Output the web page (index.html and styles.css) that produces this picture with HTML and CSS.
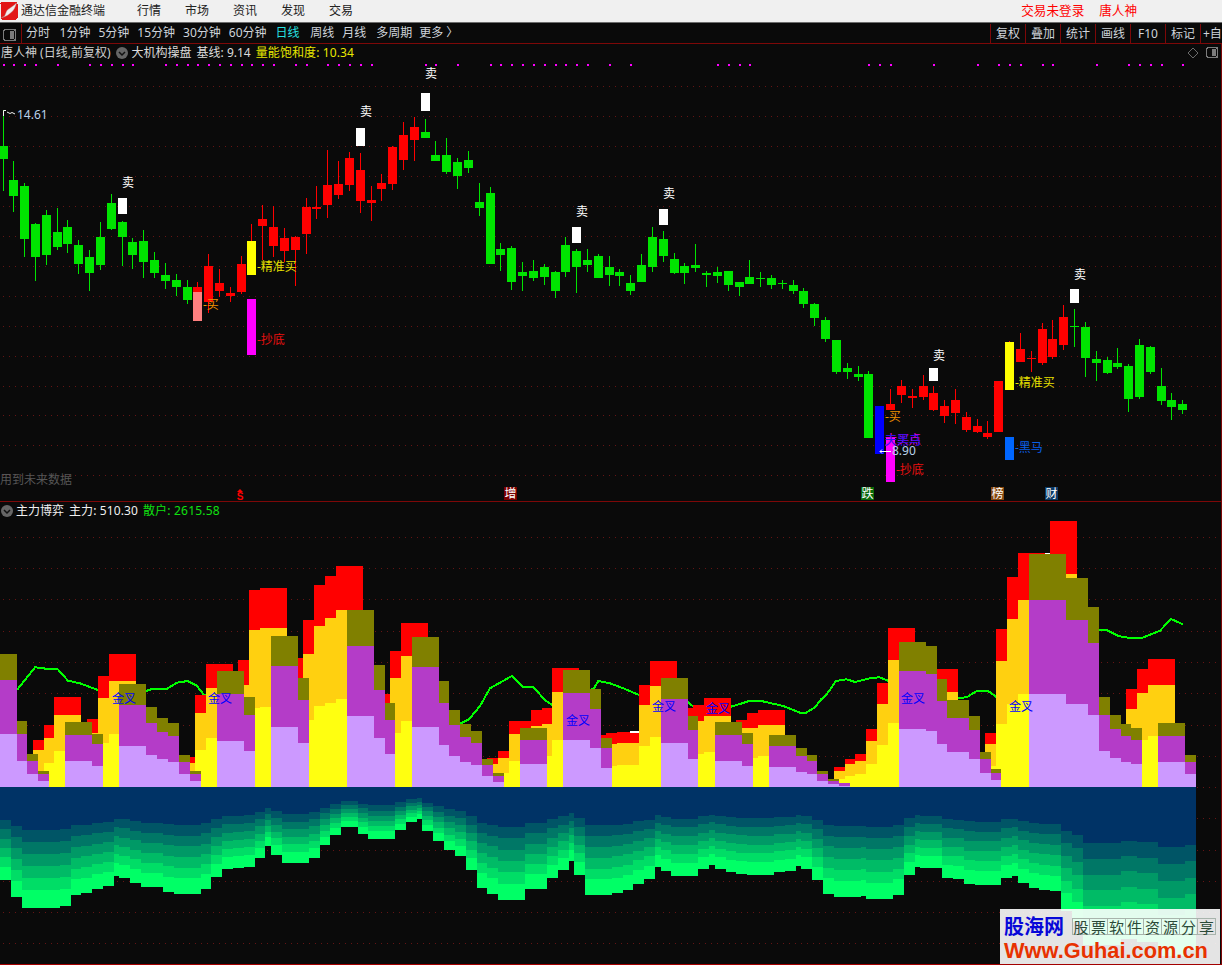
FILE: index.html
```html
<!DOCTYPE html>
<html lang="zh-CN">
<head>
<meta charset="utf-8">
<title>通达信金融终端</title>
<link rel="stylesheet" href="styles.css">
</head>
<body>
<div class="app">
  <header class="titlebar">
    <svg class="logo" viewBox="0 0 18 18" width="18" height="18" aria-hidden="true">
      <rect x="0.5" y="0" width="17" height="17.5" rx="1.5" class="logo-bg"/>
      <path class="logo-swoosh" d="M1.5 15.5 C6 15.5 5 10 8 7.5 C10.5 5.5 13 4.5 16.5 1 C15 6 13.5 8.5 11 10.5 C8.5 12.5 6.5 14.5 1.5 15.5 Z"/>
    </svg>
    <span class="app-name">通达信金融终端</span>
    <nav class="main-nav">
      <span>行情</span><span>市场</span><span>资讯</span><span>发现</span><span>交易</span>
    </nav>
    <div class="account"><span>交易未登录</span><span>唐人神</span></div>
  </header>

  <div class="toolbar">
    <div class="toggle-cell">
      <svg class="toggle-icon" viewBox="0 0 13 12" width="13" height="12" aria-hidden="true">
        <rect x="0.5" y="0.5" width="12" height="11" rx="2" class="icon-line"/>
        <rect x="7" y="2" width="4" height="8" class="icon-fill"/>
      </svg>
    </div>
    <div class="periods">
      <span class="first">分时</span><span>1分钟</span><span>5分钟</span><span>15分钟</span><span>30分钟</span><span>60分钟</span><span class="active">日线</span><span>周线</span><span>月线</span><span class="multi">多周期</span><span>更多 〉</span>
    </div>
    <div class="tools">
      <span>复权</span><span>叠加</span><span>统计</span><span>画线</span><span>F10</span><span>标记</span><span class="tool-last">+自</span>
    </div>
  </div>

  <section class="panel panel-main">
    <svg id="mainChart" class="chart" viewBox="0 44 1221 457" width="1221" height="457"></svg>
    <div class="legend legend-main">
      <span class="legend-stock">唐人神 (日线,前复权)</span>
      <svg class="chevron" viewBox="0 0 12 12" width="12" height="12" aria-hidden="true"><circle cx="6" cy="6" r="6" class="chevron-bg"/><path d="M3 5 L6 8 L9 5" class="chevron-mark"/></svg>
      <span>大机构操盘</span>
      <span class="legend-base">基线: 9.14</span>
      <span class="legend-yellow">量能饱和度: 10.34</span>
    </div>
    <div class="corner-icons">
      <svg viewBox="0 0 12 12" width="12" height="12" aria-hidden="true"><path d="M6 1 L11 6 L6 11 L1 6 Z" class="icon-thin"/></svg>
      <svg viewBox="0 0 13 12" width="13" height="12" aria-hidden="true"><rect x="0.5" y="0.5" width="11" height="10" rx="2" class="icon-line"/><rect x="6" y="2" width="4" height="7" class="icon-fill"/></svg>
    </div>
    <div class="future-note">用到未来数据</div>
  </section>

  <section class="panel panel-sub">
    <svg id="subChart" class="chart" viewBox="0 502 1221 462" width="1221" height="462"></svg>
    <div class="legend legend-sub">
      <svg class="chevron" viewBox="0 0 12 12" width="12" height="12" aria-hidden="true"><circle cx="6" cy="6" r="6" class="chevron-bg"/><path d="M3 5 L6 8 L9 5" class="chevron-mark"/></svg>
      <span class="legend-title">主力博弈</span>
      <span class="legend-title">主力: 510.30</span>
      <span class="legend-green">散户: 2615.58</span>
    </div>
    <div class="watermark">
      <div class="wm-top">
        <span class="wm-brand">股海网</span>
        <span class="wm-cells"><i>股</i><i>票</i><i>软</i><i>件</i><i>资</i><i>源</i><i>分</i><i>享</i></span>
      </div>
      <div class="wm-url">Www.Guhai.com.cn</div>
    </div>
  </section>
</div>
<script src="chart.js"></script>
</body>
</html>
```

FILE: styles.css
```css
* { box-sizing: border-box; }
html, body { margin: 0; padding: 0; background: #0a0a0a; }
body { width: 1222px; height: 965px; overflow: hidden; font: 12px/16px "Noto Sans", "Noto Sans CJK SC", sans-serif; color: #d2d2d2; }
.app { display: flex; flex-direction: column; width: 1222px; height: 965px; }

.titlebar { display: flex; align-items: center; height: 23px; flex: none; background: #f0f0f0; border-bottom: 1px solid #6c6c6c; color: #222; }
.logo { flex: none; margin-right: 3px; }
.logo-bg { fill: #e21616; }
.logo-swoosh { fill: #f4eeee; stroke: #a9a9a9; stroke-width: .4; }
.app-name { width: 84px; white-space: nowrap; }
.main-nav { display: flex; gap: 24px; margin-left: 32px; }
.account { display: flex; gap: 15px; margin-left: auto; margin-right: 85px; color: #f00; font-size: 12.6px; }

.toolbar { display: flex; align-items: stretch; height: 21px; flex: none; background: #0a0a0a; border-bottom: 1px solid #7d0808; color: #cfd4da; }
.toggle-cell { display: flex; align-items: center; width: 22px; padding-left: 3px; padding-top: 2px; border-right: 1px solid #7d0808; margin: 1px 0 0; flex: none; }
.periods { display: flex; align-items: center; gap: 8px; padding-left: 4px; white-space: nowrap; }
.periods .first { margin-right: 1.6px; }
.periods .active { margin: 0 2.6px 0 1px; color: #27e0e0; }
.periods .multi { margin: 0 -1px 0 2px; }
.tools { display: flex; align-items: stretch; margin-left: auto; }
.tools span { display: flex; align-items: center; justify-content: center; width: 35px; border-left: 1px solid #7d0808; margin-top: 1px; }
.tools .tool-last { width: 22px; overflow: hidden; justify-content: flex-start; padding-left: 2px; white-space: nowrap; }
.icon-line { fill: none; stroke: #7b7b7b; stroke-width: 1.4; }
.icon-fill { fill: #7b7b7b; }
.icon-thin { fill: none; stroke: #6a6a6a; stroke-width: 1; }

.panel { position: relative; flex: none; background: #0a0a0a; border-right: 1px solid #7d0808; }
.panel-main { height: 458px; border-bottom: 1px solid #7d0808; }
.panel-sub { height: 463px; border-bottom: 1px solid #a40000; }
.chart { display: block; }

.legend { position: absolute; top: 0; left: 0; display: flex; align-items: center; height: 17px; white-space: nowrap; color: #dcdcdc; }
.legend-main { padding-left: 1px; }
.legend-main .chevron { margin: 0 4px 0 5px; }
.legend-stock { color: #cfcfcf; }
.legend-base { margin-left: 5px; }
.legend-yellow { margin-left: 5px; color: #e8e800; letter-spacing: .1px; }
.legend-sub { top: 0; padding-left: 1px; height: 17px; }
.legend-sub .chevron { margin-right: 3px; }
.legend-sub .legend-title + .legend-title { margin-left: 5px; color: #f0f0f0; letter-spacing: .1px; }
.legend-title { color: #f0f0f0; }
.legend-green { margin-left: 5px; color: #10e010; letter-spacing: .2px; }
.chevron-bg { fill: #666; }
.chevron-mark { fill: none; stroke: #111; stroke-width: 1.5; }

.corner-icons { position: absolute; top: 3px; right: 2px; display: flex; align-items: center; gap: 7px; }
.future-note { position: absolute; left: 0; top: 428px; color: #565656; }

.watermark { position: absolute; right: 1px; bottom: 0; display: flex; flex-direction: column; width: 220px; height: 55px; padding: 5px 3px 0 4px; background: rgba(255, 255, 255, .89); }
.wm-top { display: flex; align-items: center; gap: 8px; height: 24px; }
.wm-brand { font: bold 20px/24px "Noto Sans CJK SC", sans-serif; color: #0808d8; white-space: nowrap; }
.wm-cells { display: flex; }
.wm-cells i { display: block; width: 18px; height: 17px; font: normal 15px/16px "Noto Sans CJK SC", sans-serif; color: #2b4a38; text-align: center; border: 1px solid #a8b4ac; border-left-width: 0; }
.wm-cells i:first-child { border-left-width: 1px; }
.wm-url { margin-top: 1px; font: bold 21.8px/24px "Liberation Sans", sans-serif; color: #e83200; white-space: nowrap; }

/* chart marks */
.grid { stroke: #651414; stroke-width: 1; stroke-dasharray: 1 5; fill: none; }
.c-r { fill: #ff0000; } .c-g { fill: #00e400; }
.w-r { stroke: #ff0000; } .w-g { stroke: #00e400; }
.wick { stroke-width: 1; fill: none; }
.pink { fill: #ff8080; } .yel { fill: #ffff00; } .mag { fill: #ff00ff; } .blu { fill: #0000ff; } .blu2 { fill: #0066ff; } .wht { fill: #ffffff; }
.dot { fill: #ff00ff; }
.t { font: 12px "Noto Sans", "Noto Sans CJK SC", sans-serif; }
.t-white { fill: #fff; } .t-grey { fill: #b9d2ea; } .t-orange { fill: #f09000; } .t-yellow { fill: #e8e000; } .t-red { fill: #e81010; } .t-blue { fill: #0a60e8; } .t-mag { fill: #e000e0; } .t-pure-blue { fill: #0000ff; } .t-purple { fill: #3010f0; }
.flag { fill: none; stroke: #f4f4f4; stroke-width: 1; }
.arrow { fill: none; stroke: #fff; stroke-width: 1; }
.chip-red { fill: #7a0000; } .chip-green { fill: #0a6a0a; } .chip-brown { fill: #85480f; } .chip-navy { fill: #0c3a66; }
.t-chip { fill: #fff; text-anchor: middle; }
.t-s { font: bold 10px "Liberation Sans", sans-serif; fill: #f00; text-anchor: middle; }
.s-tip { fill: #f00; }
.t-mid { text-anchor: middle; }
.red { fill: #ff0000; } .gold { fill: #ffd010; } .yellow { fill: #ffff10; } .olive { fill: #808000; } .purple { fill: #b43cc8; } .lilac { fill: #cc99ff; }
.trend { fill: none; stroke: #00ff00; stroke-width: 2; shape-rendering: crispEdges; }
.navy { fill: #003366; }
.b0 { fill: #005566; } .b1 { fill: #007766; } .b2 { fill: #009966; } .b3 { fill: #00bb66; } .b4 { fill: #00dd66; } .b5 { fill: #00ff66; }
rect { shape-rendering: crispEdges; }
line { shape-rendering: crispEdges; }
```

FILE: chart.js
```js
(function () {
  var NS = 'http://www.w3.org/2000/svg';
  function el(parent, name, attrs, text) {
    var n = document.createElementNS(NS, name);
    for (var k in attrs) n.setAttribute(k, attrs[k]);
    if (text) n.textContent = text;
    parent.appendChild(n);
    return n;
  }
  function rect(p, x1, y1, x2, y2, cls) {
    if (y2 <= y1 || x2 <= x1) return;
    el(p, 'rect', { x: x1, y: y1, width: x2 - x1, height: y2 - y1, 'class': cls });
  }
  function gridLines(p, ys) {
    ys.forEach(function (y) {
      el(p, 'line', { x1: 3, y1: y + 0.5, x2: 1221, y2: y + 0.5, 'class': 'grid' });
    });
  }
  function label(p, x, y, txt, cls) {
    el(p, 'text', { x: x, y: y + 4, 'class': 't ' + cls }, txt);
  }

  /* ---------- price panel ---------- */
  var main = document.getElementById('mainChart');
  gridLines(main, [86, 116, 146, 176, 206, 236, 266, 296, 326, 356, 386, 415, 445, 475]);

  var dots = [3,13,24,35,57,89,100,111,122,132,165,176,187,197,208,219,230,241,251,262,273,295,306,327,338,349,360,371,
    425,435,457,490,500,511,522,533,544,555,565,576,587,609,630,717,728,739,749,
    868,879,890,933,977,998,1009,1020,1042,1052,1096,1128,1139,1150,1161,1182];
  dots.forEach(function (x) { rect(main, x, 64, x + 2, 66, 'dot'); });

  // [x, bodyTop, bodyBottom, wickTop, wickBottom, colour]
  var candles = [
    [3,146,159,110,191,'g'],[13,180,196,161,212,'g'],[24,186,239,183,257,'g'],[35,224,257,223,281,'g'],[46,215,255,210,265,'g'],
    [57,232,247,208,250,'g'],[67,227,244,220,253,'g'],[78,245,264,240,274,'g'],[89,257,273,250,291,'g'],[100,237,265,222,270,'g'],
    [111,203,229,194,230,'g'],[122,222,237,221,266,'g'],[132,242,255,238,269,'g'],[143,241,262,230,278,'g'],[154,260,273,252,278,'g'],
    [165,275,281,263,289,'g'],[176,280,287,274,296,'g'],[187,287,300,280,304,'g'],
    [197,287,292,282,292,'r'],[208,266,302,254,313,'r'],[219,283,291,269,297,'r'],[230,293,296,287,302,'r'],[241,264,292,256,294,'r'],
    [251,241,275,224,241,'r'],[262,219,226,205,260,'r'],[273,227,246,206,257,'r'],[284,238,251,228,262,'r'],[295,237,250,236,286,'r'],
    [306,207,234,198,254,'r'],[316,207,209,186,219,'r'],[327,185,205,150,218,'r'],[338,184,195,161,199,'r'],[349,158,185,152,191,'r'],
    [360,170,201,153,213,'r'],[371,200,203,186,221,'r'],[381,183,189,174,201,'r'],[392,147,184,146,190,'r'],[403,135,160,122,170,'r'],
    [414,127,140,117,161,'r'],
    [425,132,138,119,138,'g'],[435,155,161,141,161,'g'],[446,155,172,138,174,'g'],[457,162,176,158,189,'g'],[468,160,168,151,173,'g'],
    [479,202,208,183,216,'g'],[490,193,264,187,264,'g'],[500,249,255,243,271,'g'],[511,248,282,246,290,'g'],[522,272,276,262,291,'g'],
    [533,271,278,260,281,'g'],[544,267,277,264,285,'g'],[555,272,291,271,298,'g'],[565,245,272,237,277,'g'],[576,251,267,249,293,'g'],
    [587,260,265,249,272,'g'],[598,256,278,254,278,'g'],[609,267,275,256,286,'g'],[619,272,276,269,286,'g'],[630,283,291,275,295,'g'],
    [641,265,282,254,282,'g'],[652,237,267,227,272,'g'],[663,239,256,231,262,'g'],[674,259,273,253,274,'g'],[684,266,273,263,284,'g'],
    [695,265,268,244,272,'g'],[706,273,275,271,287,'g'],[717,272,276,267,283,'g'],[728,271,285,271,291,'g'],[739,282,287,282,296,'g'],
    [749,277,284,260,284,'g'],[760,278,279,272,287,'g'],[771,278,285,275,289,'g'],[782,283,284,280,289,'g'],[793,285,291,280,294,'g'],
    [803,291,304,288,308,'g'],[814,304,318,303,326,'g'],[825,320,339,317,342,'g'],[836,340,372,340,374,'g'],[847,368,372,363,379,'g'],
    [858,374,377,366,381,'g'],[868,374,438,371,438,'g'],
    [890,404,410,389,410,'r'],[901,386,395,380,403,'r'],[912,396,398,389,408,'r'],[923,386,397,375,400,'r'],[933,393,410,386,411,'r'],
    [944,406,416,400,423,'r'],[955,400,413,389,424,'r'],[966,417,430,412,432,'r'],[977,426,432,419,433,'r'],[987,433,437,421,439,'r'],
    [998,381,432,381,432,'r'],[1009,342,345,341,345,'r'],[1020,349,362,333,362,'r'],[1031,358,359,351,372,'r'],[1042,329,363,323,365,'r'],
    [1052,339,357,320,359,'r'],[1063,317,345,305,350,'r'],
    [1074,326,327,309,347,'g'],[1085,327,358,322,377,'g'],[1096,359,363,351,381,'g'],[1107,360,373,357,374,'g'],[1117,363,367,348,369,'g'],
    [1128,366,399,364,412,'g'],[1139,345,397,339,399,'g'],[1150,347,372,346,374,'g'],[1161,386,401,368,405,'g'],[1171,400,407,393,420,'g'],
    [1182,404,410,400,414,'g']
  ];
  candles.forEach(function (c) {
    el(main, 'line', { x1: c[0] + 0.5, y1: c[3], x2: c[0] + 0.5, y2: c[4], 'class': 'wick w-' + c[5] });
    rect(main, Math.max(0, c[0] - 4), c[1], c[0] + 5, c[2], 'c-' + c[5]);
  });

  // signal bars [x, top, bottom, class]
  [[197,292,321,'pink'],[251,241,275,'yel'],[251,299,355,'mag'],[1009,342,390,'yel'],[879,406,454,'blu'],[890,437,482,'mag'],[1009,437,460,'blu2'],
   [122,198,214,'wht'],[360,128,146,'wht'],[425,93,111,'wht'],[576,227,243,'wht'],[663,209,225,'wht'],[933,368,381,'wht'],[1074,289,303,'wht']
  ].forEach(function (b) { rect(main, b[0] - 4, b[1], b[0] + 5, b[2], b[3]); });

  [[128,183],[366,112],[431,74],[582,212],[669,194],[939,356],[1080,275]].forEach(function (p) {
    el(main, 'text', { x: p[0], y: p[1] + 4, 'class': 't t-white t-mid' }, '卖');
  });
  label(main, 203, 305, '-买', 't-orange');
  label(main, 885, 417, '-买', 't-orange');
  label(main, 257, 267, '-精准买', 't-yellow');
  label(main, 1015, 383, '-精准买', 't-yellow');
  label(main, 257, 340, '-抄底', 't-red');
  label(main, 896, 470, '-抄底', 't-red');
  label(main, 1015, 448, '-黑马', 't-blue');
  label(main, 885, 440, '大买点', 't-mag');
  label(main, 885, 441, '天黑马', 't-purple');
  label(main, 892, 451, '8.90', 't-grey');
  el(main, 'path', { d: 'M880 451.5 H891 M882 449.5 L880 451.5 L882 453.5', 'class': 'arrow' });
  el(main, 'path', { d: 'M3.5 116 V110.5 H6 M7 112 L10 113.5 L12 112.5 L15 114', 'class': 'flag' });
  label(main, 17, 115, '14.61', 't-grey');

  // event chips
  [[504,'增','chip-red'],[861,'跌','chip-green'],[991,'榜','chip-brown'],[1045,'财','chip-navy']].forEach(function (c) {
    rect(main, c[0], 487, c[0] + 13, 500, c[2]);
    el(main, 'text', { x: c[0] + 6.5, y: 498, 'class': 't t-chip' }, c[1]);
  });
  el(main, 'polygon', { points: '240,489 237,492 243,492', 'class': 's-tip' });
  el(main, 'text', { x: 240, y: 500, 'class': 't-s' }, 'S');

  /* ---------- volume panel ---------- */
  var sub = document.getElementById('subChart');
  var BASE = 787;
  gridLines(sub, [537, 568, 599, 631, 662, 693, 725, 756, 787, 818, 850, 881, 912, 943]);

  function pts(ox, oy, list) {
    return list.map(function (p) { return (ox + p[0] / 3).toFixed(1) + ',' + (oy + p[1] / 3).toFixed(1); }).join(' ');
  }
  var trend = [
    pts(0, 470, [[51,660],[105,592],[138,596],[172,596],[204,632],[240,640],[294,660],[438,663],[456,657],[502,656],[530,638],[563,633],[590,647],[612,675]]),
    pts(400, 600, [[183,370],[207,358],[240,318],[270,265],[300,248],[335,228],[369,260],[399,260],[435,300],[456,315],[582,265],[595,243],[630,250],[670,265],[717,285],[865,307],[880,320],[993,320],[1020,312],[1050,302],[1080,302],[1150,318],[1205,340],[1215,340],[1245,322],[1260,302]]),
    pts(820, 510, [[0,573],[20,553],[48,513],[80,508],[105,516],[150,505],[178,502],[204,512],[414,564],[440,562],[472,542],[503,542],[528,560],[837,359],[860,360],[895,378],[930,384],[965,384],[1020,362],[1053,327],[1088,343]])
  ].join(' ');
  el(sub, 'polyline', { points: trend, 'class': 'trend' });

  function barsA(ox, oy, list) {
    list.forEach(function (s) {
      var x1 = Math.round(ox + s[0] / 3), x2 = Math.round(ox + s[1] / 3);
      var r = Math.round(oy + s[2] / 3), g = Math.round(oy + s[3] / 3), y = Math.round(oy + s[4] / 3);
      rect(sub, x1, r, x2, g, 'red');
      rect(sub, x1, g, x2, y, 'gold');
      rect(sub, x1, y, x2, BASE, 'yellow');
    });
  }
  function barsB(ox, oy, list) {
    list.forEach(function (s) {
      var x1 = Math.round(ox + s[0] / 3), x2 = Math.round(ox + s[1] / 3);
      var o = Math.round(oy + s[2] / 3), p = Math.round(oy + s[3] / 3), l = Math.round(oy + s[4] / 3);
      rect(sub, x1, o, x2, p, 'olive');
      rect(sub, x1, p, x2, l, 'purple');
      rect(sub, x1, l, x2, BASE, 'lilac');
    });
  }
  barsA(0, 470, [[99,132,810,840,951],[132,162,765,804,879],[162,243,681,735,843],[261,294,747,789,951],[294,327,618,684,819],[327,408,552,633,792],
    [570,585,861,879,951],[585,618,675,729,840],[618,699,582,654,804],[714,747,570,645,951],[747,780,360,480,714],[780,861,354,474,711],
    [894,909,564,624,951],[909,942,450,552,750],[942,975,345,468,708],[975,1008,318,444,699],[1008,1089,288,420,687],[1155,1170,672,699,951],[1170,1203,543,624,789]]);
  barsA(400, 600, [[3,84,69,168,363],[261,294,474,492,561],[294,327,453,474,519],[327,408,363,402,483],[393,426,330,378,561],[426,456,324,372,468],
    [456,537,204,276,420],[603,636,405,432,561],[618,651,399,432,498],[651,717,396,429,495],[717,750,255,315,438],[750,831,183,258,411],
    [864,894,324,363,561],[879,912,315,363,462],[912,993,294,348,456],[1008,1041,360,384,561],[1041,1074,339,384,474],[1074,1155,330,375,468]]);
  barsA(820, 510, [[42,75,771,783,807],[75,105,747,762,798],[105,138,732,753,792],[138,171,657,693,762],[171,204,519,582,705],[204,285,354,450,639],
    [351,414,477,546,831],[495,528,669,702,768],[528,561,357,453,642],[561,594,201,327,582],[594,675,129,270,552],[690,771,33,192,552],
    [918,951,537,597,831],[951,984,477,549,690],[984,1065,447,525,678]]);

  rect(sub, 630, 731, 639, 733, 'wht');
  rect(sub, 1045, 553, 1050, 555, 'wht');

  barsB(0, 470, [[0,51,552,630,792],[51,81,753,792,873],[81,114,852,873,912],[114,147,903,912,933],[195,276,756,795,873],[276,309,792,822,888],
    [357,438,642,705,828],[438,471,711,759,855],[471,504,744,786,867],[504,537,759,798,876],[537,570,855,876,912],[570,603,903,912,933],
    [651,732,603,672,813],[732,765,681,735,843],[813,894,498,588,771],[894,927,624,690,819],[1041,1122,420,528,738],[1122,1155,585,660,804],[1155,1185,699,750,852]]);
  barsB(400, 600, [[36,117,111,201,381],[117,147,243,309,435],[147,180,330,375,468],[180,213,372,411,486],[213,246,393,429,495],[246,279,477,495,528],[279,312,519,528,546],
    [360,441,384,419,492],[489,570,210,279,420],[570,603,267,327,444],[603,636,414,444,504],[783,864,234,297,429],[864,894,348,390,477],
    [945,1026,366,405,483],[1026,1059,399,432,498],[1107,1188,405,438,501],[1188,1221,444,468,516],[1221,1251,465,483,522],[1251,1269,513,522,543]]);
  barsB(820, 510, [[0,24,783,792,813],[24,57,807,813,822],[57,90,819,820,828],[237,318,396,483,657],[318,351,408,492,663],[351,381,507,573,702],[381,447,570,624,726],
    [447,480,618,660,747],[480,513,726,747,789],[513,543,777,789,810],[627,738,132,270,552],[738,804,204,330,582],[804,837,291,399,615],[837,870,561,615,723],
    [870,903,615,657,744],[903,933,642,678,756],[933,966,654,690,762],[1014,1095,639,678,756],[1095,1128,735,756,792]]);

  [[112,699],[208,699],[566,721],[652,707],[706,709],[901,699],[1009,707]].forEach(function (p) {
    label(sub, p[0], p[1], '金叉', 't-pure-blue');
  });

  // retail money fan: [fromZoomX, toZoomX, bottomZoomY]
  function fan(ox, list) {
    var fr = [0, .355, .455, .555, .655, .755, .855, 1];
    var cls = ['navy', 'b0', 'b1', 'b2', 'b3', 'b4', 'b5'];
    list.forEach(function (s) {
      var x1 = Math.round(ox + s[0] / 3), x2 = Math.round(ox + s[1] / 3);
      var d = 780 + s[2] / 3 - BASE;
      for (var i = 0; i < 7; i++) {
        rect(sub, x1, Math.round(BASE + d * fr[i]), x2, Math.round(BASE + d * fr[i + 1]), cls[i]);
      }
    });
  }
  fan(0, [[0,33,300],[33,66,351],[66,180,384],[180,213,378],[213,243,345],[243,276,339],[276,309,327],[309,342,318],[342,357,288],[357,390,294],[390,423,309],[423,489,321],
    [489,522,336],[522,603,342],[603,633,327],[633,666,291],[666,699,267],[699,732,264],[732,765,261],[765,795,234],[795,813,198],[813,846,225],[846,927,249],[927,960,234],
    [960,990,195],[990,1023,165],[1023,1074,141],[1074,1104,162],[1104,1185,177],[1185,1218,150],[1218,1230,126]]);
  fan(410, [[0,21,126],[21,36,117],[36,69,153],[69,102,183],[102,135,210],[135,168,228],[168,201,270],[201,231,324],[231,264,342],[264,345,360],[345,411,327],[411,444,294],
    [444,477,270],[477,492,243],[492,525,285],[525,606,345],[606,639,339],[639,669,330],[669,702,312],[702,735,297],[735,753,261],[753,783,273],[783,864,288],[864,897,267],
    [897,915,255],[915,948,267],[948,978,276],[978,1011,282],[1011,1092,285],[1092,1125,276],[1125,1158,273],[1158,1173,258],[1173,1206,267],[1206,1230,300]]);
  fan(820, [[0,9,300],[9,42,342],[42,123,351],[123,138,348],[138,219,357],[219,252,345],[252,285,285],[285,300,261],[300,366,264],[366,399,294],[399,432,297],[432,465,312],
    [465,543,315],[543,576,294],[576,594,288],[594,627,309],[627,657,324],[657,690,330],[690,723,333],[723,756,393],[756,789,426],[789,903,494],[903,951,477],[951,1014,486],[1014,1095,528],[1095,1128,511]]);
})();
```
